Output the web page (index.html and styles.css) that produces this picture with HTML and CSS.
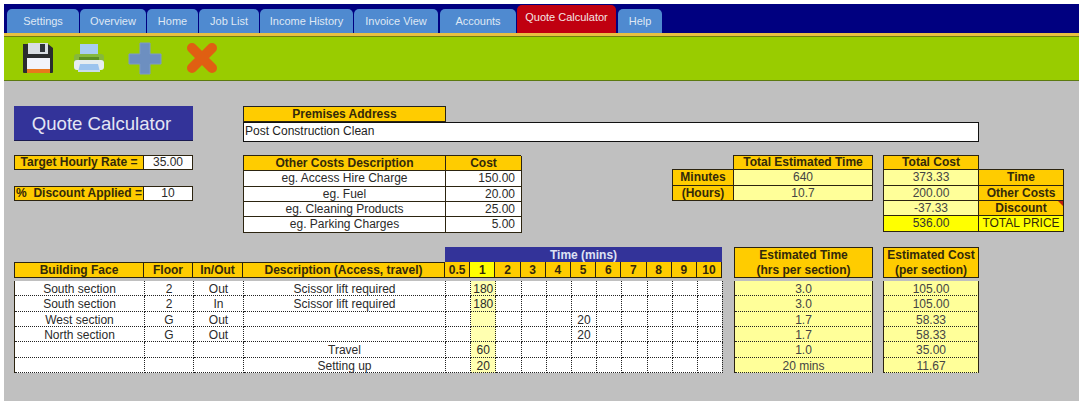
FILE: index.html
```html
<!DOCTYPE html>
<html lang="en">
<head>
    <meta charset="UTF-8">
    <title>Quote Calculator</title>
    <link rel="stylesheet" href="styles.css">
</head>
<body>
    <div class="frame">
        <div class="nav">
            <div class="tab tab-settings">Settings</div>
            <div class="tab tab-overview">Overview</div>
            <div class="tab tab-home">Home</div>
            <div class="tab tab-jobs">Job List</div>
            <div class="tab tab-income">Income History</div>
            <div class="tab tab-invoice">Invoice View</div>
            <div class="tab tab-accounts">Accounts</div>
            <div class="tab tab-quote">Quote Calculator</div>
            <div class="tab tab-help">Help</div>
        </div>

        <div class="toolbar">
            <svg class="tool-icon icon-save" viewBox="0 0 32 32">
                <path d="M1 2h25l5 4v24a1 1 0 0 1-1 1H2a1 1 0 0 1-1-1z" fill="#2b2d2f"/>
                <rect x="6" y="1" width="20" height="11" fill="#d8dde2"/>
                <rect x="18" y="2" width="5" height="8" fill="#30343a"/>
                <rect x="5" y="16" width="23" height="15" fill="#f2f4fa"/>
                <rect x="5" y="27" width="23" height="4" fill="#e8781c"/>
            </svg>
            <svg class="tool-icon icon-print" viewBox="0 0 32 30">
                <rect x="7" y="1" width="18" height="11" fill="#a9cdf2"/>
                <rect x="1" y="11" width="30" height="10" rx="3" fill="#86b83c"/>
                <rect x="1" y="17" width="30" height="10" rx="3" fill="#e6edf0"/>
                <rect x="6" y="14" width="20" height="3" fill="#5d8f22"/>
                <path d="M7 21h18l2 8H5z" fill="#9cc4ee"/>
                <rect x="5" y="27" width="22" height="2" fill="#c9dcec"/>
            </svg>
            <svg class="tool-icon icon-plus" viewBox="0 0 34 33">
                <path d="M12 1h10v11h11v10H22v10H12V22H1V12h11z" fill="#6d8fc0" stroke="#7c9ac6" stroke-width="1"/>
            </svg>
            <svg class="tool-icon icon-del" viewBox="0 0 32 32">
                <path d="M6 6l20 20M26 6L6 26" stroke="#e05f12" stroke-width="10" stroke-linecap="round"/>
            </svg>
        </div>

        <div class="sheet">
            <div class="top-row">
                <div class="title-box">Quote Calculator</div>
                <div class="address">
                    <div class="cell head address-head">Premises Address</div>
                    <div class="address-value">Post Construction Clean</div>
                </div>
            </div>

            <div class="middle-row">
                <div class="rates">
                    <div class="cell head">Target Hourly Rate =</div>
                    <div class="cell plain">35.00</div>
                    <div class="rate-gap"></div>
                    <div class="cell head rate-discount">%&nbsp; Discount Applied =</div>
                    <div class="cell plain">10</div>
                </div>

                <div class="other-costs">
                    <div class="cell head">Other Costs Description</div>
                    <div class="cell head">Cost</div>
                    <div class="cell plain">eg. Access Hire Charge</div>
                    <div class="cell plain num">150.00</div>
                    <div class="cell plain">eg. Fuel</div>
                    <div class="cell plain num">20.00</div>
                    <div class="cell plain">eg. Cleaning Products</div>
                    <div class="cell plain num">25.00</div>
                    <div class="cell plain">eg. Parking Charges</div>
                    <div class="cell plain num">5.00</div>
                </div>

                <div class="total-time">
                    <div class="blank"></div>
                    <div class="cell head">Total Estimated Time</div>
                    <div class="cell head">Minutes</div>
                    <div class="cell pale">640</div>
                    <div class="cell head">(Hours)</div>
                    <div class="cell pale">10.7</div>
                </div>

                <div class="total-cost">
                    <div class="cell head">Total Cost</div>
                    <div class="blank"></div>
                    <div class="cell pale">373.33</div>
                    <div class="cell head">Time</div>
                    <div class="cell pale">200.00</div>
                    <div class="cell head">Other Costs</div>
                    <div class="cell pale">-37.33</div>
                    <div class="cell head has-note">Discount</div>
                    <div class="cell bright">536.00</div>
                    <div class="cell bright total-label">TOTAL PRICE</div>
                </div>
            </div>

            <div class="bottom-row">
                <div class="jobs">
                    <div class="jobs-head">
                        <div class="time-title">Time (mins)</div>
                        <div class="cell head first">Building Face</div>
                        <div class="cell head">Floor</div>
                        <div class="cell head">In/Out</div>
                        <div class="cell head">Description (Access, travel)</div>
                        <div class="cell head">0.5</div>
                        <div class="cell head now">1</div>
                        <div class="cell head">2</div>
                        <div class="cell head">3</div>
                        <div class="cell head">4</div>
                        <div class="cell head">5</div>
                        <div class="cell head">6</div>
                        <div class="cell head">7</div>
                        <div class="cell head">8</div>
                        <div class="cell head">9</div>
                        <div class="cell head">10</div>
                    </div>
                    <div class="jobs-body">
                        <div class="dot">South section</div><div class="dot">2</div><div class="dot">Out</div><div class="dot">Scissor lift required</div><div class="dot"></div><div class="dot yel">180</div><div class="dot"></div><div class="dot"></div><div class="dot"></div><div class="dot"></div><div class="dot"></div><div class="dot"></div><div class="dot"></div><div class="dot"></div><div class="dot"></div>
                        <div class="dot">South section</div><div class="dot">2</div><div class="dot">In</div><div class="dot">Scissor lift required</div><div class="dot"></div><div class="dot yel">180</div><div class="dot"></div><div class="dot"></div><div class="dot"></div><div class="dot"></div><div class="dot"></div><div class="dot"></div><div class="dot"></div><div class="dot"></div><div class="dot"></div>
                        <div class="dot">West section</div><div class="dot">G</div><div class="dot">Out</div><div class="dot"></div><div class="dot"></div><div class="dot yel"></div><div class="dot"></div><div class="dot"></div><div class="dot"></div><div class="dot">20</div><div class="dot"></div><div class="dot"></div><div class="dot"></div><div class="dot"></div><div class="dot"></div>
                        <div class="dot">North section</div><div class="dot">G</div><div class="dot">Out</div><div class="dot"></div><div class="dot"></div><div class="dot yel"></div><div class="dot"></div><div class="dot"></div><div class="dot"></div><div class="dot">20</div><div class="dot"></div><div class="dot"></div><div class="dot"></div><div class="dot"></div><div class="dot"></div>
                        <div class="dot"></div><div class="dot"></div><div class="dot"></div><div class="dot">Travel</div><div class="dot"></div><div class="dot yel">60</div><div class="dot"></div><div class="dot"></div><div class="dot"></div><div class="dot"></div><div class="dot"></div><div class="dot"></div><div class="dot"></div><div class="dot"></div><div class="dot"></div>
                        <div class="dot"></div><div class="dot"></div><div class="dot"></div><div class="dot">Setting up</div><div class="dot"></div><div class="dot yel">20</div><div class="dot"></div><div class="dot"></div><div class="dot"></div><div class="dot"></div><div class="dot"></div><div class="dot"></div><div class="dot"></div><div class="dot"></div><div class="dot"></div>
                    </div>
                </div>

                <div class="estimate est-time">
                    <div class="cell head est-head">Estimated Time<br>(hrs per section)</div>
                    <div class="est-body">
                        <div class="dot">3.0</div>
                        <div class="dot">3.0</div>
                        <div class="dot">1.7</div>
                        <div class="dot">1.7</div>
                        <div class="dot">1.0</div>
                        <div class="dot">20 mins</div>
                    </div>
                </div>

                <div class="estimate est-cost">
                    <div class="cell head est-head">Estimated Cost<br>(per section)</div>
                    <div class="est-body">
                        <div class="dot">105.00</div>
                        <div class="dot">105.00</div>
                        <div class="dot">58.33</div>
                        <div class="dot">58.33</div>
                        <div class="dot">35.00</div>
                        <div class="dot">11.67</div>
                    </div>
                </div>
            </div>
        </div>
    </div>
</body>
</html>
```

FILE: styles.css
```css
body {
    margin: 4px;
    background-color: white;
    font-family: "Liberation Sans", Arial, sans-serif;
    font-size: 12px;
    color: #2a2a2a;
}

.frame {
    width: 1075px;
    height: 397px;
    background-color: #c0c0c0;
}

.nav {
    display: flex;
    align-items: flex-end;
    height: 29px;
    padding-left: 3px;
    gap: 1px;
    box-sizing: border-box;
    background-color: #000080;
}

.tab {
    height: 24px;
    line-height: 24px;
    text-align: center;
    font-size: 11px;
    color: #dfe8f4;
    background-color: #4f8ad0;
    border-radius: 5px 5px 0 0;
}

.tab-settings { width: 72px; }
.tab-overview { width: 66px; }
.tab-home { width: 51px; }
.tab-jobs { width: 60px; }
.tab-income { width: 93px; }
.tab-invoice { width: 84px; margin-right: 1px; }
.tab-accounts { width: 76px; }
.tab-help { width: 44px; margin-left: 1px; }

.tab-quote {
    width: 99px;
    height: 28px;
    line-height: 25px;
    background-color: #c00010;
    color: #f4e4e4;
}

.toolbar {
    display: flex;
    align-items: center;
    height: 48px;
    box-sizing: border-box;
    padding-left: 18px;
    background-color: #99cc00;
    border-top: 3px solid #e8c040;
    border-bottom: 1px solid #5c7a10;
    box-shadow: inset 0 1px 0 #6f7d10;
}

.tool-icon {
    display: block;
    flex: none;
    filter: blur(0.4px);
}

.icon-save { width: 32px; height: 32px; margin-right: 19px; }
.icon-print { width: 32px; height: 30px; margin-right: 23px; }
.icon-plus { width: 34px; height: 33px; margin-right: 24px; }
.icon-del { width: 32px; height: 32px; }

.sheet {
    padding: 25px 0 0 10px;
}

.top-row {
    display: flex;
    height: 35px;
}

.title-box {
    width: 179px;
    box-sizing: border-box;
    padding-right: 4px;
    line-height: 35px;
    text-align: center;
    font-size: 18.6px;
    color: #e4e6f4;
    background-color: #333399;
    border-bottom: 1px solid #1a1a50;
}

.address {
    margin-left: 50px;
    width: 736px;
}

.address-head {
    width: 203px;
    height: 16px;
    border: 1px solid #222;
    border-bottom: none;
}

.address-value {
    height: 20px;
    box-sizing: border-box;
    line-height: 17px;
    padding-left: 1px;
    background-color: white;
    border: 1px solid #111;
    color: #222;
}

.cell {
    box-sizing: border-box;
    line-height: 14px;
    text-align: center;
    white-space: nowrap;
    border-right: 1px solid #2c2410;
    border-bottom: 1px solid #2c2410;
}

.head {
    background-color: #ffcc00;
    font-weight: bold;
    color: #33290a;
}

.plain {
    background-color: white;
}

.pale {
    background-color: #ffff99;
    color: #444;
}

.bright {
    background-color: #ffff00;
    color: #333;
}

.num {
    text-align: right;
    padding-right: 6px;
}

.total-label {
    color: #33290a;
}

.blank {
    border-bottom: 1px solid #2c2410;
}

.has-note {
    position: relative;
}

.has-note::after {
    content: "";
    position: absolute;
    top: 0;
    right: 0;
    border-top: 5px solid #c02010;
    border-left: 5px solid transparent;
}

.middle-row {
    display: flex;
    margin-top: 14px;
    align-items: flex-start;
    height: 77px;
}

.rates,
.other-costs,
.total-time,
.total-cost {
    display: grid;
    grid-auto-rows: 15.33px;
}

.rates {
    width: 179px;
    grid-template-columns: 130px 49px;
}

.rates .cell {
    border-top: 1px solid #2c2410;
    line-height: 13px;
}

.rates > .head {
    border-left: 1px solid #2c2410;
}

.rate-gap {
    grid-column: 1 / span 2;
}

.other-costs {
    width: 278px;
    margin-left: 50px;
    grid-template-columns: 202px 76px;
    border-top: 1px solid #2c2410;
    border-left: 1px solid #2c2410;
    box-sizing: border-box;
}

.total-time {
    width: 201px;
    margin-left: 151px;
    grid-template-columns: 62px 139px;
}

.total-time > .blank {
    border-right: 1px solid #2c2410;
}

.total-time > .head:nth-child(3),
.total-time > .head:nth-child(5) {
    border-left: 1px solid #2c2410;
}

.total-time > .head:nth-child(2) {
    border-top: 1px solid #2c2410;
    line-height: 13px;
}

.total-cost {
    width: 181px;
    margin-left: 10px;
    grid-template-columns: 96px 85px;
}

.total-cost > .cell:first-child {
    border-top: 1px solid #2c2410;
    line-height: 13px;
}

.total-cost > .cell:nth-child(odd) {
    border-left: 1px solid #2c2410;
}

.bottom-row {
    display: flex;
    margin-top: 15px;
}

.jobs {
    width: 708px;
}

.jobs-head,
.jobs-body {
    display: grid;
    grid-template-columns: 130px 49px 50px 202px repeat(11, 25.2px);
    grid-auto-rows: 15.4px;
}

.jobs-head .cell {
    padding-top: 1px;
}

.jobs-head .first {
    border-left: 1px solid #2c2410;
}

.time-title {
    grid-column: 5 / span 11;
    line-height: 17px;
    text-align: center;
    font-weight: bold;
    color: #dfe2f4;
    background-color: #333399;
}

.jobs-head > .head:nth-child(-n+5) {
    border-top: 1px solid #2c2410;
    padding-top: 0;
}

.jobs-head > .head:nth-child(-n+5):not(:nth-child(5)) {
    grid-row: 2;
}

.now {
    background-color: #ffff00;
}

.jobs-body {
    margin-top: 3px;
    background-color: white;
    border-left: 1px solid #2c2410;
}

.dot {
    box-sizing: border-box;
    line-height: 16px;
    text-align: center;
    border-right: 1px dotted #222;
    border-bottom: 1px dotted #222;
}

.yel {
    background-color: #ffffb0;
}

.estimate {
    width: 139px;
    margin-left: 12px;
}

.est-cost {
    width: 96px;
    margin-left: 10px;
}

.est-head {
    height: 30.8px;
    line-height: 15px;
    border-left: 1px solid #2c2410;
    border-top: 1px solid #2c2410;
}

.est-body {
    display: grid;
    grid-auto-rows: 15.4px;
    margin-top: 3px;
    background-color: #ffff99;
    border-left: 1px solid #2c2410;
}

.est-body .dot {
    color: #444;
    border-right: 1px solid #2c2410;
}
```
